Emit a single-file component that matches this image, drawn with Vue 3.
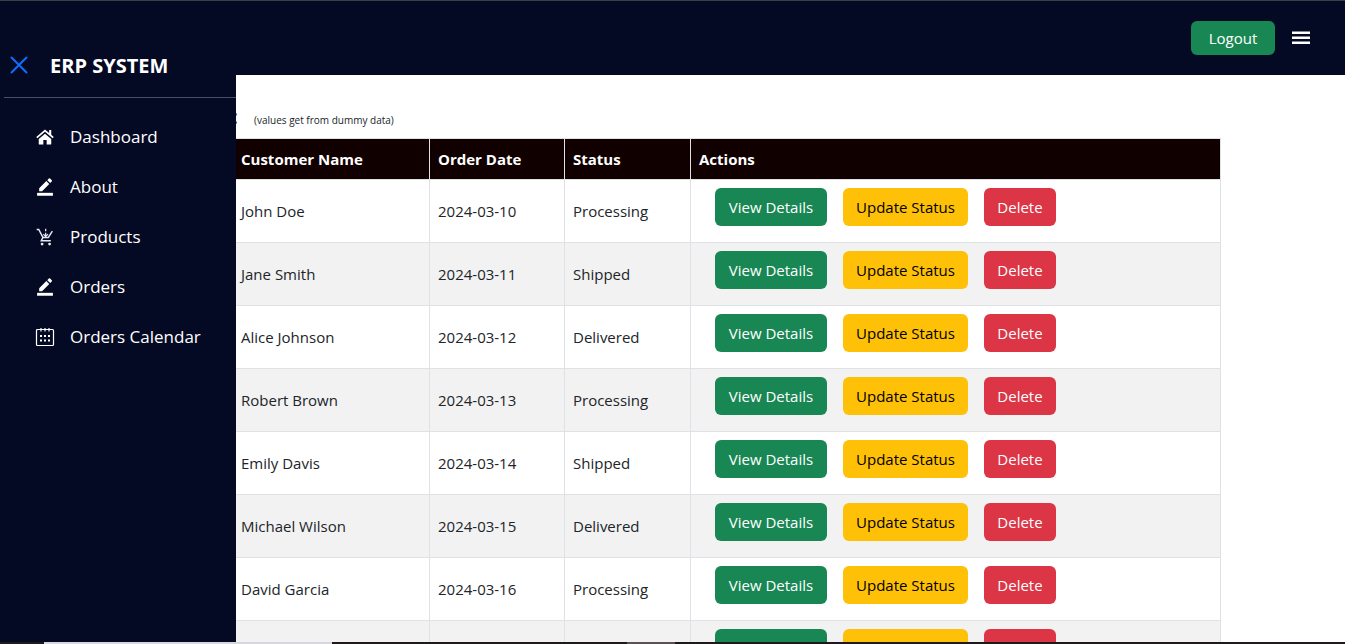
<script setup>
const menu = [
  { label: 'Dashboard', icon: 'home' },
  { label: 'About', icon: 'pen' },
  { label: 'Products', icon: 'cart' },
  { label: 'Orders', icon: 'pen' },
  { label: 'Orders Calendar', icon: 'calendar' },
]

const orders = [
  { id: 1, customer: 'John Doe', date: '2024-03-10', status: 'Processing' },
  { id: 2, customer: 'Jane Smith', date: '2024-03-11', status: 'Shipped' },
  { id: 3, customer: 'Alice Johnson', date: '2024-03-12', status: 'Delivered' },
  { id: 4, customer: 'Robert Brown', date: '2024-03-13', status: 'Processing' },
  { id: 5, customer: 'Emily Davis', date: '2024-03-14', status: 'Shipped' },
  { id: 6, customer: 'Michael Wilson', date: '2024-03-15', status: 'Delivered' },
  { id: 7, customer: 'David Garcia', date: '2024-03-16', status: 'Processing' },
  { id: 8, customer: 'Sarah Martinez', date: '2024-03-17', status: 'Shipped' },
]
</script>

<template>
  <div class="app">
    <header class="topbar">
      <button class="btn green logout" type="button">Logout</button>
      <button class="icon-btn" type="button" aria-label="Open menu">
        <svg width="24" height="24" viewBox="0 0 24 24" fill="#fff"><path d="M3 5.500h18v2.500H3zM3 10.500h18V13H3zM3 15.500h18V18H3z" /></svg>
      </button>
    </header>

    <aside class="sidebar">
      <div class="brand">
        <button class="icon-btn" type="button" aria-label="Close menu">
          <svg width="22" height="22" viewBox="0 0 22 22" fill="none" stroke="#0d6efd" stroke-width="2" stroke-linecap="round"><path d="M3.500 2.500l15 15M18.500 2.500l-15 15" /></svg>
        </button>
        <h1>ERP SYSTEM</h1>
      </div>
      <nav>
        <a v-for="item in menu" :key="item.label" href="#">
          <svg v-if="item.icon === 'home'" width="20" height="20" viewBox="0 0 24 24" fill="#fff">
            <path d="M12 8.200l-7.500 6.300V20a1 1 0 0 0 1 1H10v-5.500h4V21h4.500a1 1 0 0 0 1-1v-5.500z" />
            <path d="M12 3L1.500 12l1.300 1.500L12 5.800l9.200 7.700 1.300-1.500-3-2.600V3.500h-2.500v3.700z" />
          </svg>
          <svg v-else-if="item.icon === 'pen'" width="20" height="20" viewBox="0 0 24 24" fill="#fff">
            <path d="M2.500 19h19v3.500h-19z" />
            <path d="M5 13.500V17h3.500l8.600-8.600-3.500-3.500zM14.700 3.800l3.500 3.500 1.900-1.900a1.100 1.100 0 0 0 0-1.600l-1.900-1.900a1.100 1.100 0 0 0-1.600 0z" />
          </svg>
          <svg v-else-if="item.icon === 'cart'" width="20" height="20" viewBox="0 0 24 24" fill="none" stroke="#e6e8f2" stroke-width="1.700">
            <path d="M2 3h2.500l5 9.500H16L20.800 5M9.500 12.500L7.500 16.500H19" />
            <path d="M12.800 2v3M12.800 7v4.500M10 8.500l2.800 3 2.800-3" stroke-width="1.500" />
            <circle cx="8.500" cy="20.500" r="1.700" fill="#e6e8f2" stroke="none" />
            <circle cx="17.500" cy="20.500" r="1.700" fill="#e6e8f2" stroke="none" />
          </svg>
          <svg v-else width="20" height="20" viewBox="0 0 20 20" fill="none" stroke="#fff" stroke-width="1.200">
            <rect x="1.500" y="2.500" width="17" height="16" rx="1" />
            <path d="M6 1v3.500M10 1v3.500M14 1v3.500" />
            <path d="M5 9h2M9 9h2M13 9h2M5 13.500h2M9 13.500h2M13 13.500h2" stroke-width="2" />
          </svg>
          <span>{{ item.label }}</span>
        </a>
      </nav>
    </aside>

    <main>
      <div class="heading">
        <h2>Orders:</h2>
        <small>(values get from dummy data)</small>
      </div>
      <table>
        <colgroup>
          <col class="c-id" /><col class="c-name" /><col class="c-date" /><col class="c-status" /><col />
        </colgroup>
        <thead>
          <tr>
            <th>Order ID</th>
            <th>Customer Name</th>
            <th>Order Date</th>
            <th>Status</th>
            <th>Actions</th>
          </tr>
        </thead>
        <tbody>
          <tr v-for="order in orders" :key="order.id">
            <td>{{ order.id }}</td>
            <td>{{ order.customer }}</td>
            <td>{{ order.date }}</td>
            <td>{{ order.status }}</td>
            <td>
              <div class="actions">
                <button class="btn green view" type="button">View Details</button>
                <button class="btn yellow update" type="button">Update Status</button>
                <button class="btn red delete" type="button">Delete</button>
              </div>
            </td>
          </tr>
        </tbody>
      </table>
    </main>

    <div class="strip"><i class="dark start"></i><i class="light"></i><i class="dark mid"></i><i class="soft"></i><i class="dark rest"></i></div>
  </div>
</template>

<style>
body {
  margin: 0;
}
</style>

<style scoped>
.app {
  position: relative;
  height: 100vh;
  overflow: hidden;
  background: #fff;
  color: #212529;
  font: 15px/24px "Segoe UI", "Open Sans", "Noto Sans", sans-serif;
}
.topbar {
  display: flex;
  align-items: center;
  justify-content: flex-end;
  gap: 14px;
  box-sizing: border-box;
  height: 75px;
  padding-right: 32px;
  border-top: 1px solid #3a3e4a;
  background: #050a24;
}
.btn {
  height: 38px;
  padding: 0;
  border: 0;
  border-radius: 6px;
  color: #fff;
  font: inherit;
  white-space: nowrap;
}
.green { background: #198754; }
.yellow { background: #ffc107; color: #000; }
.red { background: #dc3545; }
.logout { width: 84px; height: 34px; }
.view { width: 112px; }
.update { width: 125px; }
.delete { width: 72px; }
.icon-btn {
  display: flex;
  padding: 0;
  border: 0;
  background: none;
}
.sidebar {
  position: absolute;
  z-index: 1;
  top: 1px;
  bottom: 0;
  left: 0;
  box-sizing: border-box;
  width: 236px;
  padding-left: 4px;
  background: #050a24;
  color: #fff;
}
.brand {
  display: flex;
  align-items: center;
  gap: 20px;
  box-sizing: border-box;
  height: 97px;
  padding: 33px 0 0 4px;
  border-bottom: 1px solid #4b4e61;
}
h1 {
  margin: 0;
  font-size: 20px;
  line-height: 24px;
  font-weight: 700;
}
nav {
  display: flex;
  flex-direction: column;
  padding-top: 14px;
}
nav a {
  display: flex;
  align-items: center;
  gap: 15px;
  height: 50px;
  padding-left: 31px;
  color: #fff;
  font-size: 17px;
  text-decoration: none;
}
main {
  padding: 28px 124px 0 125px;
}
.heading {
  display: flex;
  align-items: baseline;
  gap: 16px;
  height: 35px;
}
h2 {
  width: 113px;
  margin: 0;
  font-size: 20px;
  line-height: 28px;
  font-weight: 600;
  text-align: right;
  white-space: nowrap;
}
small {
  font-size: 10px;
}
table {
  width: 100%;
  border-collapse: collapse;
  table-layout: fixed;
}
.c-id { width: 107px; }
.c-name { width: 197px; }
.c-date { width: 135px; }
.c-status { width: 126px; }
th, td {
  padding: 0 8px;
  border: 1px solid #dee2e6;
  text-align: left;
}
th {
  height: 40px;
  background: #100000;
  color: #fff;
  font-weight: 700;
}
td { height: 62px; }
tbody tr:nth-child(even) { background: #f2f2f2; }
.actions {
  display: flex;
  gap: 16px;
  padding: 0 16px 8px;
}
.strip {
  position: absolute;
  z-index: 2;
  right: 0;
  bottom: 0;
  left: 0;
  display: flex;
  height: 2px;
}
.dark { background: #1e1a1b; }
.light { width: 288px; background: #d8d8dc; }
.start { width: 44px; }
.mid { width: 295px; }
.soft { width: 48px; background: #5b5053; }
.rest { flex: 1; }
</style>
